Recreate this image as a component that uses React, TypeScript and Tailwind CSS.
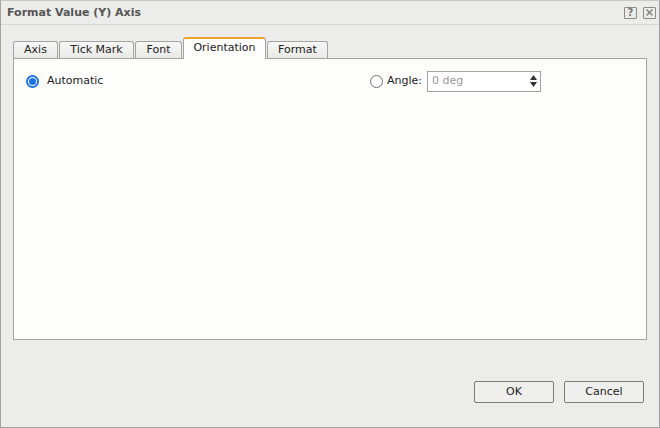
import { useState } from "react";

const tabs = [
  { label: "Axis", w: "w-[45px]" },
  { label: "Tick Mark", w: "w-[75px]" },
  { label: "Font", w: "w-[47px]" },
  { label: "Orientation", w: "w-[83px]" },
  { label: "Format", w: "w-[61px]" },
];

function Radio({ checked }: { checked: boolean }) {
  return checked ? (
    <span className="w-[13px] h-[13px] rounded-full border-[2px] border-[#1a73e8] bg-white flex items-center justify-center">
      <span className="w-[7px] h-[7px] rounded-full bg-[#1a73e8]" />
    </span>
  ) : (
    <span className="w-[13px] h-[13px] rounded-full border border-[#6f6f6f] bg-white" />
  );
}

export default function App() {
  const [active, setActive] = useState("Orientation");
  const [auto, setAuto] = useState(true);

  return (
    <div className="w-[660px] h-[428px] bg-[#ececea] border border-[#a3a3a3] border-t-[#c8c8c8] flex flex-col font-['DejaVu_Sans',Verdana,sans-serif] text-[11px] text-[#222]">
      {/* title bar */}
      <div className="h-[24px] flex items-center justify-between pl-[6px] pr-[3px] border-b border-[#d8d8d6]">
        <span className="text-[11px] font-bold text-[#555] pt-px">Format Value (Y) Axis</span>
        <div className="flex items-center gap-[6px]">
          <button className="w-[13px] h-[12px] border border-[#8a8a8a] rounded-[1px] flex items-center justify-center text-[10px] font-bold leading-none text-[#777]">?</button>
          <button className="w-[13px] h-[12px] border border-[#8a8a8a] rounded-[1px] flex items-center justify-center text-[#777]">
            <svg width="7" height="7" viewBox="0 0 7 7">
              <path d="M0.5 0.5L6.5 6.5M6.5 0.5L0.5 6.5" stroke="#777" strokeWidth="1.2" />
            </svg>
          </button>
        </div>
      </div>

      <div className="flex-1 flex flex-col pt-[12px] px-[12px]">
        {/* tabs */}
        <div className="flex items-end gap-px h-[21px]">
          {tabs.map((t) => {
            const on = t.label === active;
            return (
              <button
                key={t.label}
                onClick={() => setActive(t.label)}
                className={
                  on
                    ? `${t.w} h-[22px] -mb-px relative z-10 bg-[#fdfefc] border border-[#a3a3a3] border-t-2 border-t-[#f0a22e] border-b-0 rounded-t-[3px] flex items-center justify-center pb-[2px]`
                    : `${t.w} h-[17px] bg-gradient-to-b from-[#f7f7f6] to-[#e9e9e8] border border-[#a3a3a3] border-b-0 rounded-t-[3px] flex items-center justify-center`
                }
              >
                {t.label}
              </button>
            );
          })}
        </div>

        {/* panel */}
        <div className="h-[282px] bg-[#fdfefc] border border-[#a3a3a3] flex items-start pt-[12px] pl-[12px]">
          <label className="flex items-center gap-[8px] h-[20px] w-[344px]" onClick={() => setAuto(true)}>
            <Radio checked={auto} />
            <span>Automatic</span>
          </label>
          <label className="flex items-center h-[20px]" onClick={() => setAuto(false)}>
            <Radio checked={!auto} />
            <span className="ml-[4px] mr-[5px]">Angle:</span>
            <div className="w-[114px] h-[21px] border border-[#a3a3a3] bg-white flex items-center justify-between pl-[4px] pr-[3px]">
              <span className="text-[#999]">0 deg</span>
              <svg width="7" height="12" viewBox="0 0 7 12">
                <path d="M3.5 0L7 5H0Z" fill="#333" />
                <path d="M0 7H7L3.5 12Z" fill="#333" />
              </svg>
            </div>
          </label>
        </div>

        {/* footer */}
        <div className="flex justify-end gap-[10px] mt-[41px] pr-[3px]">
          <button className="w-[80px] h-[22px] border border-[#7a7a7a] rounded-[2px] bg-[#efefee]">OK</button>
          <button className="w-[80px] h-[22px] border border-[#7a7a7a] rounded-[2px] bg-[#efefee]">Cancel</button>
        </div>
      </div>
    </div>
  );
}
